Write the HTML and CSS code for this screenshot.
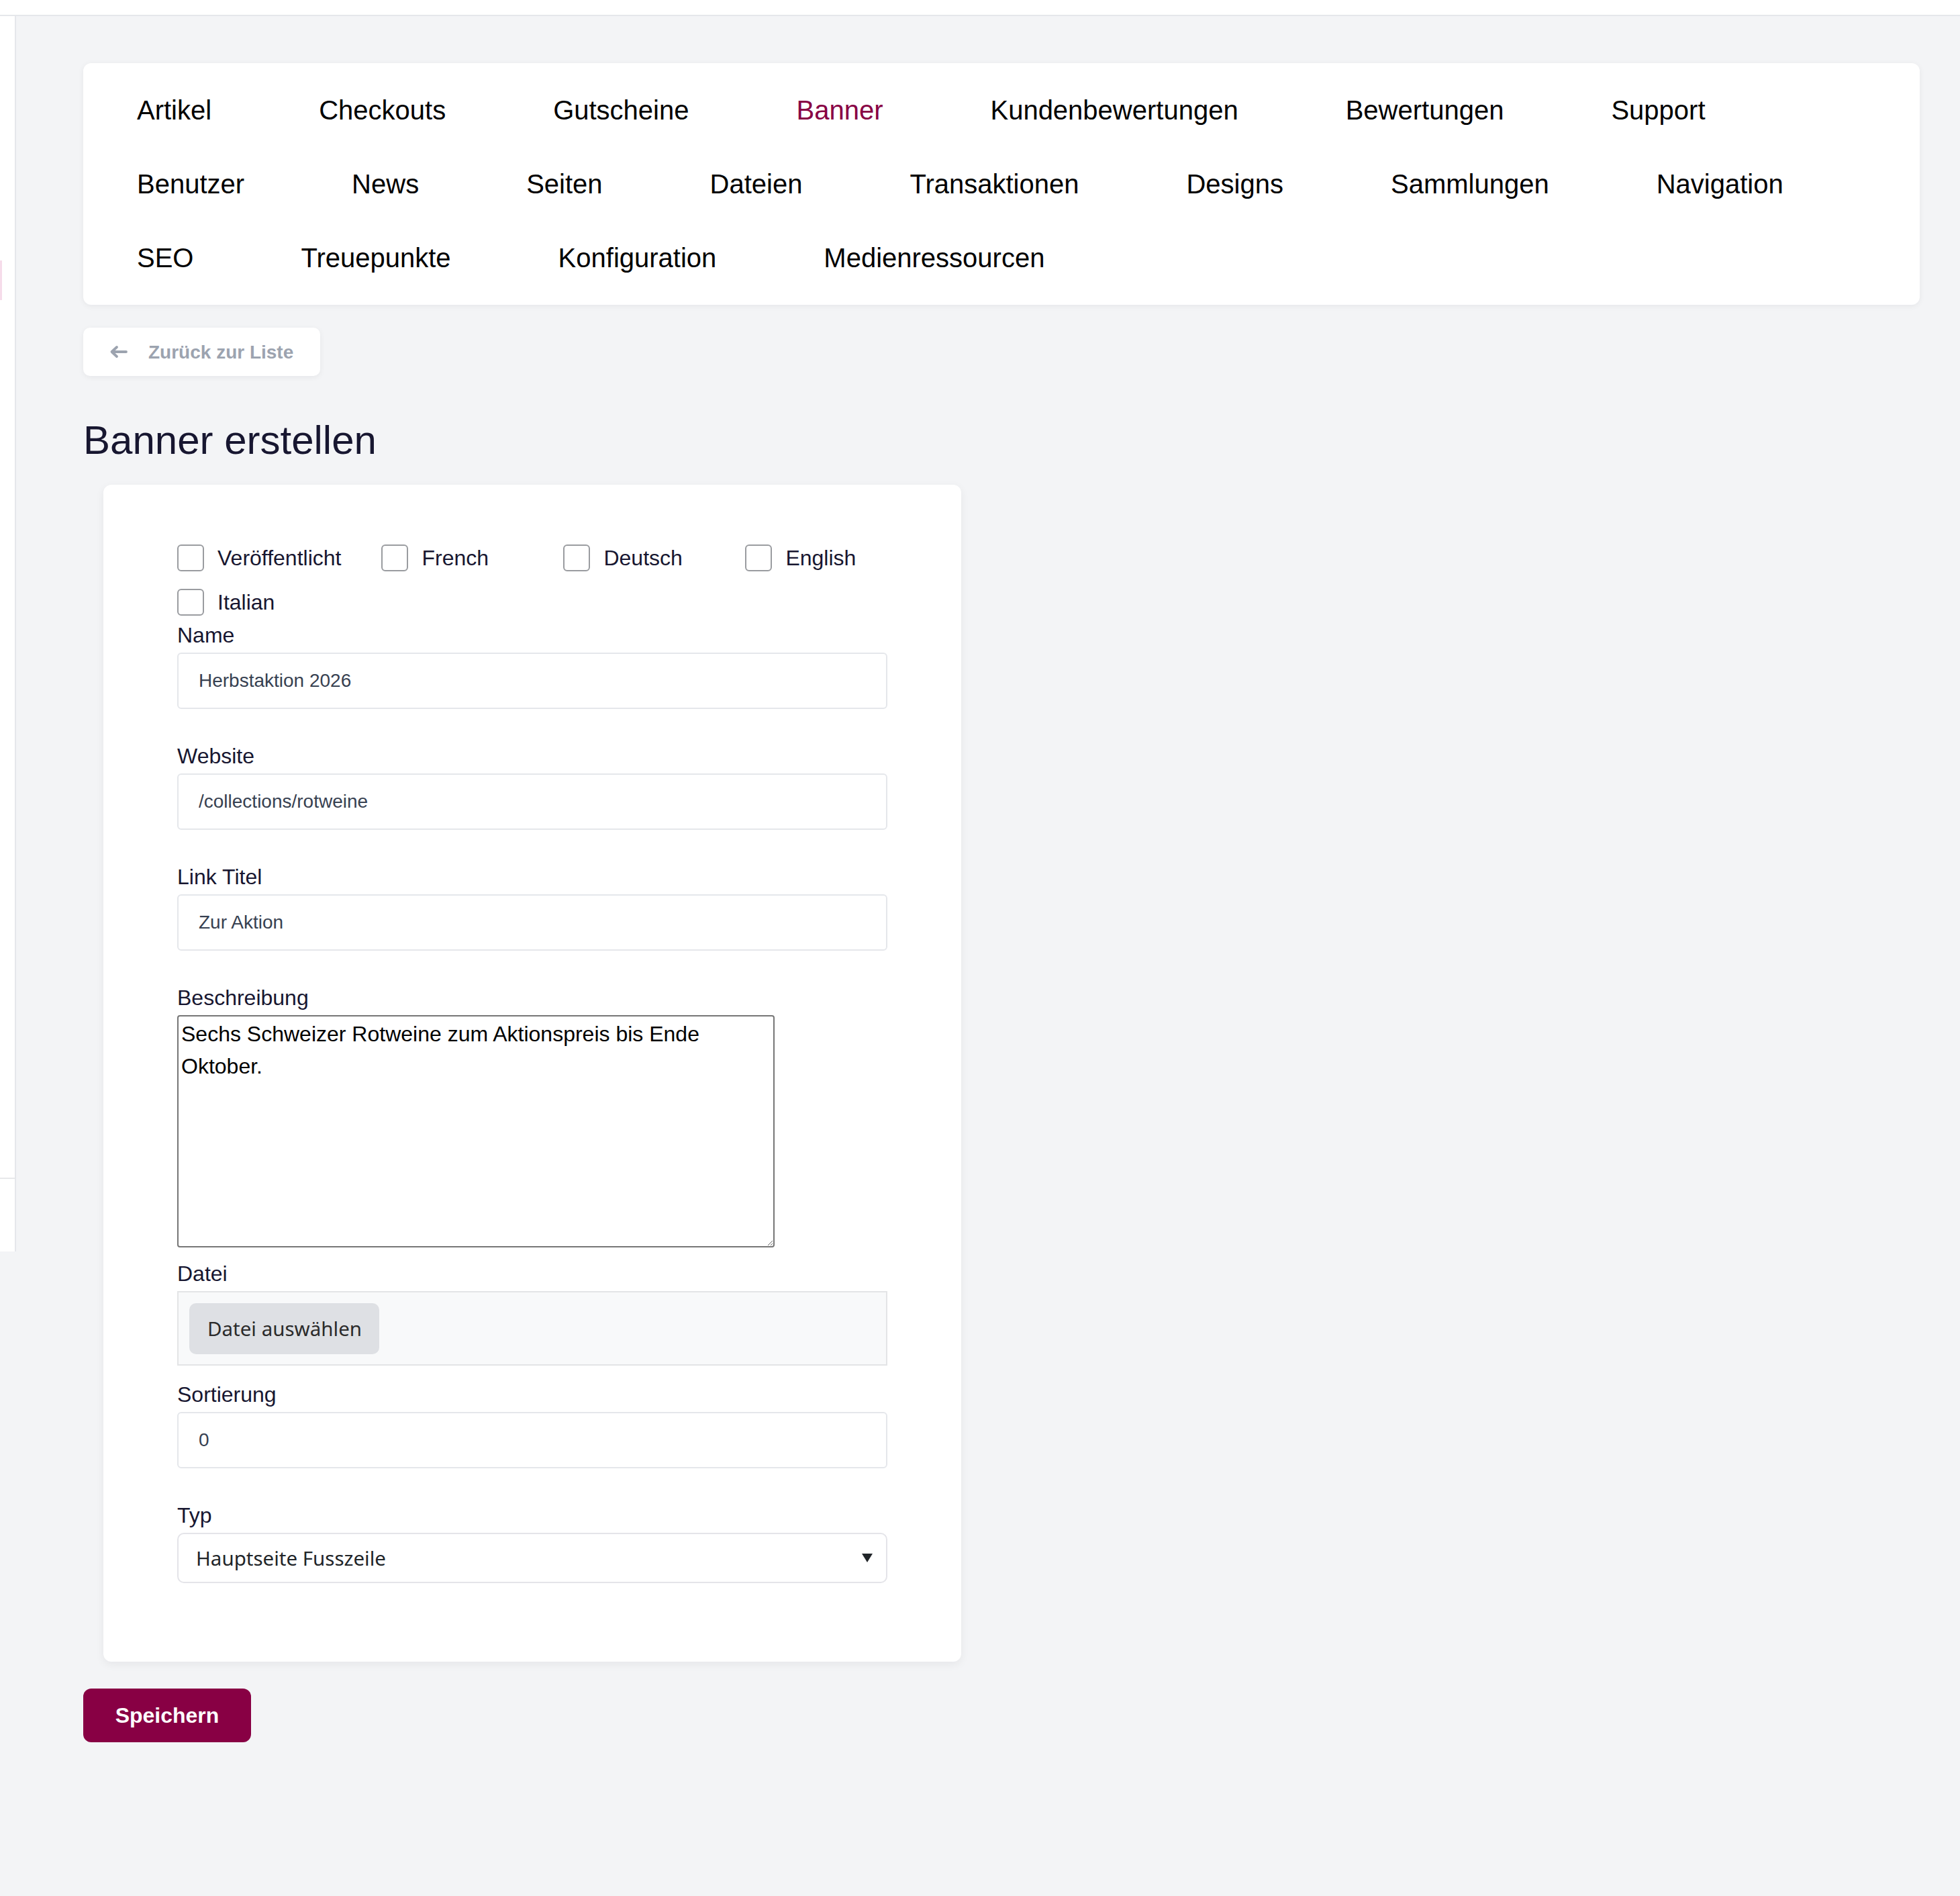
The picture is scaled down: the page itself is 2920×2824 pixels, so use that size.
FILE: index.html
```html
<!DOCTYPE html>
<html lang="de">
<head>
<meta charset="utf-8">
<title>Banner erstellen</title>
<link rel="stylesheet" href="styles.css">
</head>
<body>
<div class="topbar"></div>
<div class="layout">
  <aside class="sidebar">
    <div class="sb-top"><div class="sb-active"></div></div>
  </aside>
  <main class="main">
    <nav class="nav-card">
      <a class="nav-link">Artikel</a>
      <a class="nav-link">Checkouts</a>
      <a class="nav-link">Gutscheine</a>
      <a class="nav-link active">Banner</a>
      <a class="nav-link">Kundenbewertungen</a>
      <a class="nav-link">Bewertungen</a>
      <a class="nav-link">Support</a>
      <a class="nav-link">Benutzer</a>
      <a class="nav-link">News</a>
      <a class="nav-link">Seiten</a>
      <a class="nav-link">Dateien</a>
      <a class="nav-link">Transaktionen</a>
      <a class="nav-link">Designs</a>
      <a class="nav-link">Sammlungen</a>
      <a class="nav-link">Navigation</a>
      <a class="nav-link">SEO</a>
      <a class="nav-link">Treuepunkte</a>
      <a class="nav-link">Konfiguration</a>
      <a class="nav-link">Medienressourcen</a>
    </nav>

    <a class="back-btn">
      <svg class="back-icon" viewBox="0 0 28 20" width="28" height="20" aria-hidden="true">
        <path d="M25 10H4M11 3L3.5 10L11 17" fill="none" stroke="#9ca3af" stroke-width="3.8" stroke-linecap="round" stroke-linejoin="round"/>
      </svg>
      <span>Zurück zur Liste</span>
    </a>

    <h1 class="page-title">Banner erstellen</h1>

    <form class="form-card">
      <div class="check-group">
        <label class="check"><input type="checkbox" class="check-box"><span>Veröffentlicht</span></label>
        <label class="check"><input type="checkbox" class="check-box"><span>French</span></label>
        <label class="check"><input type="checkbox" class="check-box"><span>Deutsch</span></label>
        <label class="check"><input type="checkbox" class="check-box"><span>English</span></label>
        <label class="check"><input type="checkbox" class="check-box"><span>Italian</span></label>
      </div>

      <div class="field">
        <label class="field-label">Name</label>
        <input class="text-input" type="text" value="Herbstaktion 2026">
      </div>
      <div class="field">
        <label class="field-label">Website</label>
        <input class="text-input" type="text" value="/collections/rotweine">
      </div>
      <div class="field">
        <label class="field-label">Link Titel</label>
        <input class="text-input" type="text" value="Zur Aktion">
      </div>
      <div class="field field-textarea">
        <label class="field-label">Beschreibung</label>
        <textarea class="textarea">Sechs Schweizer Rotweine zum Aktionspreis bis Ende Oktober.</textarea>
      </div>
      <div class="field field-file">
        <label class="field-label">Datei</label>
        <div class="file-box"><span class="file-btn">Datei auswählen</span></div>
      </div>
      <div class="field">
        <label class="field-label">Sortierung</label>
        <input class="text-input" type="text" value="0">
      </div>
      <div class="field field-last">
        <label class="field-label">Typ</label>
        <div class="select">
          <span class="select-text">Hauptseite Fusszeile</span>
          <svg class="select-arrow" viewBox="0 0 16 13" width="16" height="13" aria-hidden="true">
            <path d="M0 0H16L8 13Z" fill="#212529"/>
          </svg>
        </div>
      </div>
    </form>

    <button class="save-btn" type="button">Speichern</button>
  </main>
</div>
</body>
</html>
```

FILE: styles.css
```css
* {
  box-sizing: border-box;
}

html, body {
  margin: 0;
  padding: 0;
}

body {
  background: #f3f4f6;
  font-family: "Liberation Sans", Arial, sans-serif;
  color: #171630;
}

.topbar {
  height: 24px;
  background: #ffffff;
  border-bottom: 2px solid #e5e7eb;
}

.layout {
  display: flex;
  align-items: flex-start;
}

.sidebar {
  width: 24px;
  flex: 0 0 24px;
  height: 1840px;
  background: #ffffff;
  border-right: 2px solid #e5e7eb;
}

.sb-top {
  height: 1732px;
  border-bottom: 2px solid #e7e8ea;
  padding-top: 364px;
}

.sb-active {
  width: 3px;
  height: 59px;
  background: #f6dcea;
}

.main {
  flex: 1;
  display: flex;
  flex-direction: column;
  align-items: flex-start;
  padding: 70px 60px 220px 100px;
}

.nav-card {
  align-self: stretch;
  display: flex;
  flex-wrap: wrap;
  background: #ffffff;
  border-radius: 12px;
  padding: 15px 0;
  box-shadow: 0 2px 10px rgba(17, 24, 39, 0.06);
}

.nav-link {
  display: block;
  padding: 0 80px;
  line-height: 110px;
  font-size: 40px;
  color: #000000;
  text-decoration: none;
  white-space: nowrap;
}

.nav-link.active {
  color: #880044;
}

.back-btn {
  margin-top: 34px;
  display: flex;
  align-items: center;
  gap: 30px;
  height: 72px;
  padding: 0 40px 0 39px;
  background: #ffffff;
  border-radius: 10px;
  box-shadow: 0 2px 8px rgba(17, 24, 39, 0.06);
  font-size: 28px;
  font-weight: 700;
  color: #9ca3af;
  text-decoration: none;
}

.back-btn span {
  position: relative;
  top: 1px;
}

.back-icon {
  display: block;
}

.page-title {
  margin: 60px 0 30px 0;
  font-size: 60px;
  line-height: 72px;
  font-weight: 400;
  color: #171630;
}

.form-card {
  margin: 0 0 0 30px;
  width: 1278px;
  background: #ffffff;
  border-radius: 12px;
  padding: 84px 110px 117px 110px;
  box-shadow: 0 4px 14px rgba(17, 24, 39, 0.06);
}

.check-group {
  display: flex;
  flex-wrap: wrap;
  column-gap: 60px;
  row-gap: 16px;
  margin-right: -10px;
}

.check {
  display: flex;
  align-items: center;
  gap: 20px;
  min-width: 211px;
  height: 50px;
  font-size: 32px;
  color: #171630;
}

.check-box {
  appearance: none;
  -webkit-appearance: none;
  margin: 0;
  width: 40px;
  height: 40px;
  border: 2px solid #9a9ca0;
  border-radius: 6px;
  background: #ffffff;
  flex: 0 0 40px;
}

.field {
  margin-bottom: 46px;
}

.field-textarea {
  margin-bottom: 15px;
}

.field-file {
  margin-bottom: 19px;
}

.field-last {
  margin-bottom: 0;
}

.field-label {
  display: block;
  font-size: 32px;
  line-height: 48px;
  margin-bottom: 2px;
  color: #171630;
}

.text-input {
  display: block;
  width: 100%;
  height: 84px;
  margin: 0;
  padding: 0 30px;
  border: 2px solid #e5e7eb;
  border-radius: 6px;
  background: #ffffff;
  font-family: "Liberation Sans", Arial, sans-serif;
  font-size: 28px;
  color: #374151;
  outline: none;
}

.textarea {
  display: block;
  width: 890px;
  height: 346px;
  margin: 0;
  padding: 2px 4px;
  border: 2px solid #767676;
  border-radius: 4px;
  background: #ffffff;
  font-family: "Liberation Sans", Arial, sans-serif;
  font-size: 32px;
  line-height: 48px;
  color: #000000;
  resize: both;
}

.file-box {
  display: flex;
  align-items: center;
  height: 111px;
  padding: 0 16px;
  border: 2px solid #e3e4e6;
  background: #f8f9fa;
}

.file-btn {
  display: flex;
  align-items: center;
  height: 76px;
  padding: 0 26px 0 27px;
  background: #dee0e4;
  border-radius: 10px;
  font-family: "Noto Sans", "Open Sans", sans-serif;
  font-size: 29.5px;
  color: #2b2b2b;
  white-space: nowrap;
}

.select {
  display: flex;
  align-items: center;
  justify-content: space-between;
  height: 75px;
  padding: 0 20px 0 26px;
  border: 2px solid #e4e4e9;
  border-radius: 10px;
  background: #ffffff;
}

.select-text {
  font-family: "Noto Sans", "Open Sans", sans-serif;
  font-size: 29.5px;
  color: #212529;
}

.select-arrow {
  display: block;
}

.save-btn {
  margin-top: 40px;
  height: 80px;
  width: 250px;
  padding: 0;
  border: none;
  border-radius: 12px;
  background: #880044;
  color: #ffffff;
  font-family: "Liberation Sans", Arial, sans-serif;
  font-size: 32px;
  font-weight: 700;
}
```
